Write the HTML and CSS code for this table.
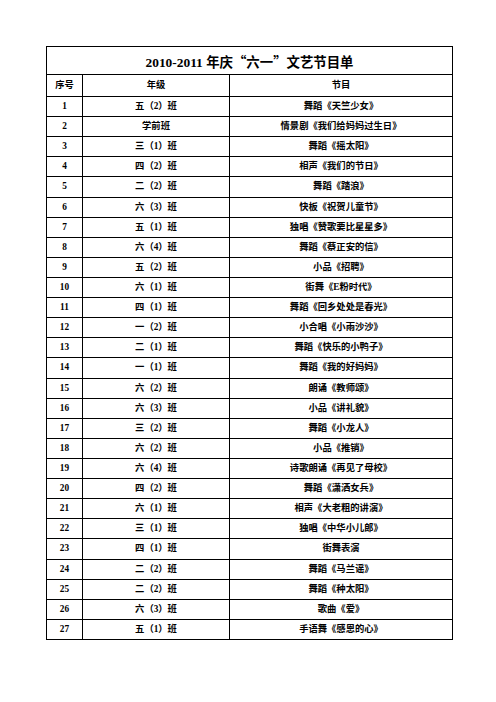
FILE: index.html
```html
<!DOCTYPE html>
<html lang="zh">
<head>
<meta charset="utf-8">
<link rel="stylesheet" href="styles.css">
</head>
<body>
<div class="sheet">
  <div class="title">2010-2011 年庆<span class="q">“</span>六一<span class="q">”</span>文艺节目单</div>
  <div class="cell head">序号</div><div class="cell head">年级</div><div class="cell head">节目</div>
  <div class="cell">1</div><div class="cell">五（2）班</div><div class="cell">舞蹈《天竺少女》</div>
  <div class="cell">2</div><div class="cell">学前班</div><div class="cell">情景剧《我们给妈妈过生日》</div>
  <div class="cell">3</div><div class="cell">三（1）班</div><div class="cell">舞蹈《摇太阳》</div>
  <div class="cell">4</div><div class="cell">四（2）班</div><div class="cell">相声《我们的节日》</div>
  <div class="cell">5</div><div class="cell">二（2）班</div><div class="cell">舞蹈《踏浪》</div>
  <div class="cell">6</div><div class="cell">六（3）班</div><div class="cell">快板《祝贺儿童节》</div>
  <div class="cell">7</div><div class="cell">五（1）班</div><div class="cell">独唱《赞歌要比星星多》</div>
  <div class="cell">8</div><div class="cell">六（4）班</div><div class="cell">舞蹈《蔡正安的信》</div>
  <div class="cell">9</div><div class="cell">五（2）班</div><div class="cell">小品《招聘》</div>
  <div class="cell">10</div><div class="cell">六（1）班</div><div class="cell">街舞《E粉时代》</div>
  <div class="cell">11</div><div class="cell">四（1）班</div><div class="cell">舞蹈《回乡处处是春光》</div>
  <div class="cell">12</div><div class="cell">一（2）班</div><div class="cell">小合唱《小雨沙沙》</div>
  <div class="cell">13</div><div class="cell">二（1）班</div><div class="cell">舞蹈《快乐的小鸭子》</div>
  <div class="cell">14</div><div class="cell">一（1）班</div><div class="cell">舞蹈《我的好妈妈》</div>
  <div class="cell">15</div><div class="cell">六（2）班</div><div class="cell">朗诵《教师颂》</div>
  <div class="cell">16</div><div class="cell">六（3）班</div><div class="cell">小品《讲礼貌》</div>
  <div class="cell">17</div><div class="cell">三（2）班</div><div class="cell">舞蹈《小龙人》</div>
  <div class="cell">18</div><div class="cell">六（2）班</div><div class="cell">小品《推销》</div>
  <div class="cell">19</div><div class="cell">六（4）班</div><div class="cell">诗歌朗诵《再见了母校》</div>
  <div class="cell">20</div><div class="cell">四（2）班</div><div class="cell">舞蹈《潇洒女兵》</div>
  <div class="cell">21</div><div class="cell">六（1）班</div><div class="cell">相声《大老粗的讲演》</div>
  <div class="cell">22</div><div class="cell">三（1）班</div><div class="cell">独唱《中华小儿郎》</div>
  <div class="cell">23</div><div class="cell">四（1）班</div><div class="cell">街舞表演</div>
  <div class="cell">24</div><div class="cell">二（2）班</div><div class="cell">舞蹈《马兰谣》</div>
  <div class="cell">25</div><div class="cell">二（2）班</div><div class="cell">舞蹈《种太阳》</div>
  <div class="cell">26</div><div class="cell">六（3）班</div><div class="cell">歌曲《爱》</div>
  <div class="cell">27</div><div class="cell">五（1）班</div><div class="cell">手语舞《感恩的心》</div>
</div>
</body>
</html>
```

FILE: styles.css
```css
html, body {
  margin: 0;
  padding: 0;
  background: #ffffff;
}

body {
  padding: 46px 0 0 46px;
  font-family: "Liberation Serif", "Noto Sans CJK SC", serif;
  font-weight: bold;
  color: #000000;
}

.sheet {
  display: grid;
  grid-template-columns: 35px 146px 222px;
  grid-template-rows: 27px 21px repeat(4, 19px) 20px repeat(8, 19px) 20px repeat(8, 19px) 20px repeat(4, 19px);
  gap: 1px;
  padding: 1px;
  background: #000000;
  width: max-content;
}

.title {
  grid-column: 1 / 4;
  background: #ffffff;
  display: flex;
  align-items: center;
  justify-content: center;
  font-size: 13.4px;
  white-space: pre;
}

.q {
  font-family: "Noto Sans CJK SC", sans-serif;
  display: inline-block;
  width: 1em;
  text-align: center;
}

.cell {
  background: #ffffff;
  display: flex;
  align-items: center;
  justify-content: center;
  font-size: 9.3px;
  line-height: 1;
  white-space: nowrap;
}
```
